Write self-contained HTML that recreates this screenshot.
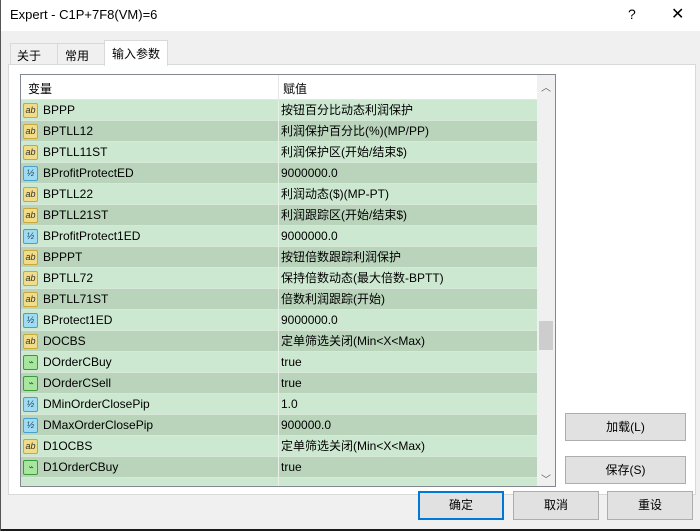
<!DOCTYPE html><html><head><meta charset="utf-8"><style>
*{margin:0;padding:0;box-sizing:border-box}
body{width:700px;height:531px;background:#f0f0f0;font-family:"Liberation Sans","Noto Sans CJK SC",sans-serif;font-size:12px;color:#000;position:relative;overflow:hidden}
.a{position:absolute}
.row{position:absolute;left:21px;width:516px;height:21px;line-height:20px;border-bottom:1px solid #d8e8d8}
.row span{position:absolute;top:0}
.n{left:22px}.v{left:260px}
.l{background:#cde8d0}.d{background:#b9d4bb}
.ic{position:absolute;left:2px;top:3px;width:15px;height:15px;border-radius:2px;font-size:9px;line-height:13px;text-align:center}
.ab{background:#f1dc8a;border:1px solid #c8a83a;color:#333}
.hf{background:#9fdcf2;border:1px solid #4aa0c8;color:#246}
.gr{background:#a8e6a0;border:1px solid #3c9a3c;color:#262}
.btn{position:absolute;background:#e1e1e1;border:1px solid #adadad;text-align:center;line-height:26px;font-size:12px}
</style></head><body>
<div class="a" style="left:0;top:0;width:700px;height:31px;background:#fff"></div>
<div class="a" style="left:10px;top:7px;font-size:13px">Expert - C1P+7F8(VM)=6</div>
<div class="a" style="left:628px;top:6px;font-size:14px">?</div>
<div class="a" style="left:671px;top:4px;font-size:16px">✕</div>
<div class="a" style="left:10px;top:43px;width:48px;height:22px;border:1px solid #d9d9d9;background:#f0f0f0;padding:3px 0 0 6px">关于</div>
<div class="a" style="left:57px;top:43px;width:48px;height:22px;border:1px solid #d9d9d9;background:#f0f0f0;padding:3px 0 0 7px">常用</div>
<div class="a" style="left:104px;top:40px;width:64px;height:26px;border:1px solid #d9d9d9;border-bottom:none;background:#fff;padding:4px 0 0 7px;z-index:2">输入参数</div>
<div class="a" style="left:8px;top:64px;width:688px;height:431px;background:#fff;border:1px solid #d9d9d9"></div>
<div class="a" style="left:20px;top:74px;width:536px;height:413px;border:1px solid #828790;background:#fff;overflow:hidden">
<div class="a" style="left:0;top:0;width:516px;height:25px;background:#fff;border-bottom:1px solid #e5e5e5"><span class="a" style="left:7px;top:5px">变量</span><span class="a" style="left:262px;top:5px">赋值</span></div>
<div class="a" style="left:257px;top:0;width:1px;height:25px;background:#e5e5e5"></div>
<div class="a" style="left:516px;top:0;width:18px;height:411px;background:#f0f0f0"></div>
<div class="a" style="left:518px;top:246px;width:14px;height:29px;background:#cdcdcd"></div>
<div class="a" style="left:520px;top:4px;font-size:10px;color:#606060">︿</div>
<div class="a" style="left:520px;top:396px;font-size:10px;color:#606060">﹀</div>
</div>
<div style="position:absolute;left:0;top:0">
<div class="row l" style="top:100px"><i class="ic ab">ab</i><span class="n">BPPP</span><span class="v">按钮百分比动态利润保护</span></div>
<div class="row d" style="top:121px"><i class="ic ab">ab</i><span class="n">BPTLL12</span><span class="v">利润保护百分比(%)(MP/PP)</span></div>
<div class="row l" style="top:142px"><i class="ic ab">ab</i><span class="n">BPTLL11ST</span><span class="v">利润保护区(开始/结束$)</span></div>
<div class="row d" style="top:163px"><i class="ic hf">½</i><span class="n">BProfitProtectED</span><span class="v">9000000.0</span></div>
<div class="row l" style="top:184px"><i class="ic ab">ab</i><span class="n">BPTLL22</span><span class="v">利润动态($)(MP-PT)</span></div>
<div class="row d" style="top:205px"><i class="ic ab">ab</i><span class="n">BPTLL21ST</span><span class="v">利润跟踪区(开始/结束$)</span></div>
<div class="row l" style="top:226px"><i class="ic hf">½</i><span class="n">BProfitProtect1ED</span><span class="v">9000000.0</span></div>
<div class="row d" style="top:247px"><i class="ic ab">ab</i><span class="n">BPPPT</span><span class="v">按钮倍数跟踪利润保护</span></div>
<div class="row l" style="top:268px"><i class="ic ab">ab</i><span class="n">BPTLL72</span><span class="v">保持倍数动态(最大倍数-BPTT)</span></div>
<div class="row d" style="top:289px"><i class="ic ab">ab</i><span class="n">BPTLL71ST</span><span class="v">倍数利润跟踪(开始)</span></div>
<div class="row l" style="top:310px"><i class="ic hf">½</i><span class="n">BProtect1ED</span><span class="v">9000000.0</span></div>
<div class="row d" style="top:331px"><i class="ic ab">ab</i><span class="n">DOCBS</span><span class="v">定单筛选关闭(Min&lt;X&lt;Max)</span></div>
<div class="row l" style="top:352px"><i class="ic gr">⌁</i><span class="n">DOrderCBuy</span><span class="v">true</span></div>
<div class="row d" style="top:373px"><i class="ic gr">⌁</i><span class="n">DOrderCSell</span><span class="v">true</span></div>
<div class="row l" style="top:394px"><i class="ic hf">½</i><span class="n">DMinOrderClosePip</span><span class="v">1.0</span></div>
<div class="row d" style="top:415px"><i class="ic hf">½</i><span class="n">DMaxOrderClosePip</span><span class="v">900000.0</span></div>
<div class="row l" style="top:436px"><i class="ic ab">ab</i><span class="n">D1OCBS</span><span class="v">定单筛选关闭(Min&lt;X&lt;Max)</span></div>
<div class="row d" style="top:457px"><i class="ic gr">⌁</i><span class="n">D1OrderCBuy</span><span class="v">true</span></div>
<div class="row l" style="top:478px;height:8px;overflow:hidden"></div>
</div>
<div class="a" style="left:278px;top:100px;width:1px;height:386px;background:#e8f0e8"></div>
<div class="btn" style="left:565px;top:413px;width:121px;height:28px">加载(L)</div>
<div class="btn" style="left:565px;top:456px;width:121px;height:28px">保存(S)</div>
<div class="btn" style="left:418px;top:491px;width:86px;height:29px;border:2px solid #0078d7;line-height:25px">确定</div>
<div class="btn" style="left:513px;top:491px;width:86px;height:29px">取消</div>
<div class="btn" style="left:607px;top:491px;width:86px;height:29px">重设</div>
<div class="a" style="left:0;top:529px;width:700px;height:2px;background:#1a1a1a"></div>
<div class="a" style="left:0;top:0;width:1px;height:531px;background:#555"></div>
</body></html>
